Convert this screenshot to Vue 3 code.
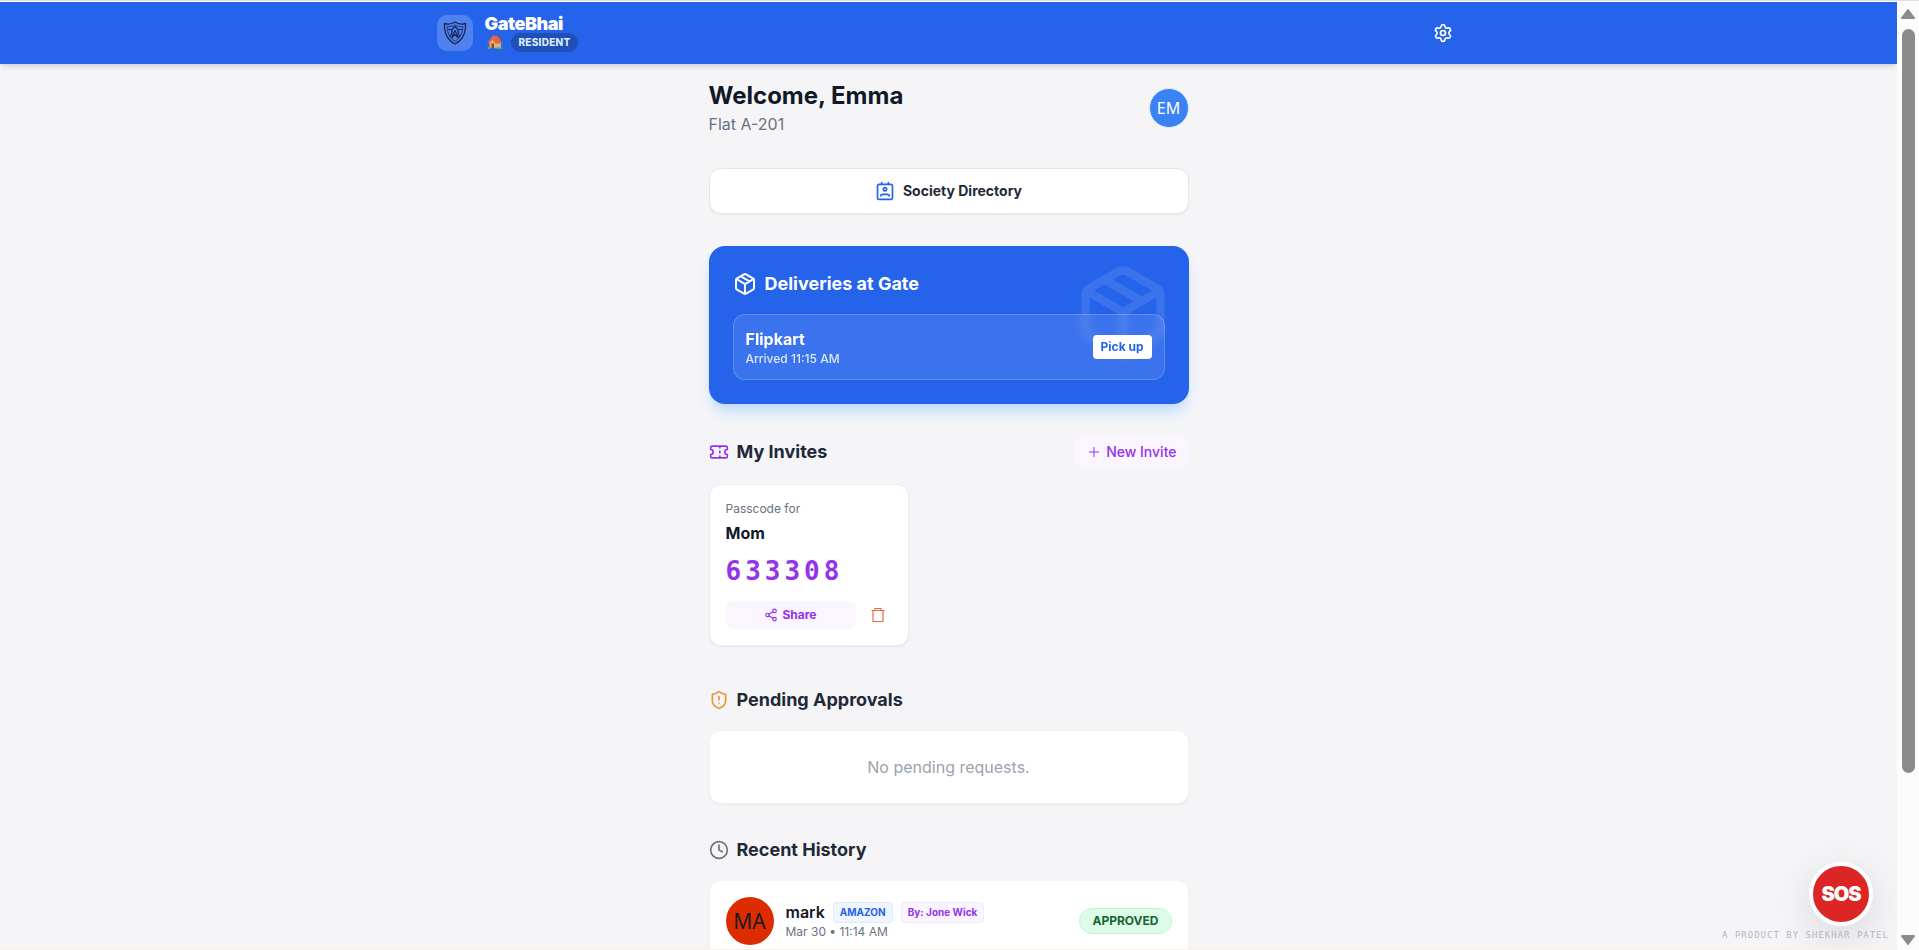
<template>
  <div class="shell">
    <div class="page">
      <header class="topbar">
        <div class="topbar-inner">
          <div class="brand">
            <div class="brand-logo">
              <svg viewBox="0 0 24 24" class="icon-24" fill="none" stroke="#172554" stroke-linejoin="round">
                <path d="M12 1C9.500 2.800 5.500 3.500 1.500 2.500C1 12 4.500 19 12 23C19.500 19 23 12 22.500 2.500C18.500 3.500 14.500 2.800 12 1Z" stroke-width="1.300" />
                <path d="M12 4C10 5.400 7 5.800 4.200 5.500C4.200 12 6.800 17 12 20.300C17.200 17 19.800 12 19.800 5.500C17 5.800 14 5.400 12 4Z" stroke-width="0.800" />
                <path d="M5 8.500H9L12 5.500L15 8.500H19M9 8.500C9.500 11 8 14 6.800 15.500M15 8.500C14.500 11 16 14 17.200 15.500M12 9.500L8.500 17M12 9.500L15.500 17M8.500 17L12 13.500L15.500 17" stroke-width="1.200" />
              </svg>
            </div>
            <div class="brand-text">
              <div class="brand-name">GateBhai</div>
              <div class="brand-role">
                <svg viewBox="0 0 16 16" class="house" aria-hidden="true">
                  <path d="M11 1.500h2v6h-2z" fill="#8d5a48" />
                  <path d="M2.500 8L7 3l7 5.500V14H2.500z" fill="#e8b070" />
                  <path d="M6 1.500L0.500 8.500L2 9.500L5.500 5.500L8.500 9.500L15.500 9.500L10.500 2z" fill="#e0664a" />
                  <path d="M4.500 9.500h2.500V14h-2.500z" fill="#8a4b32" />
                  <path d="M9.500 10.500h3v2h-3z" fill="#7ec8f2" />
                  <path d="M0.500 12.500h3V15h-3zM8 13.500h7.500V15H8z" fill="#5da447" />
                </svg>
                <span class="role-badge">RESIDENT</span>
              </div>
            </div>
          </div>
          <button class="settings" type="button" aria-label="Settings">
            <svg viewBox="0 0 24 24" class="icon-20 line">
              <path d="M9.671 4.136a2.340 2.340 0 0 1 4.659 0 2.340 2.340 0 0 0 3.319 1.915 2.340 2.340 0 0 1 2.330 4.033 2.340 2.340 0 0 0 0 3.831 2.340 2.340 0 0 1-2.330 4.033 2.340 2.340 0 0 0-3.319 1.915 2.340 2.340 0 0 1-4.659 0 2.340 2.340 0 0 0-3.320-1.915 2.340 2.340 0 0 1-2.330-4.033 2.340 2.340 0 0 0 0-3.831A2.340 2.340 0 0 1 6.350 6.051a2.340 2.340 0 0 0 3.319-1.915" />
              <circle cx="12" cy="12" r="3" />
            </svg>
          </button>
        </div>
      </header>

      <main class="content">
        <section class="welcome">
          <div>
            <h1>Welcome, {{ resident.name }}</h1>
            <p>Flat {{ resident.flat }}</p>
          </div>
          <div class="avatar small">{{ resident.initials }}</div>
        </section>

        <button class="directory" type="button">
          <svg viewBox="0 0 24 24" class="icon-20 line">
            <rect x="3" y="4" width="18" height="18" rx="2" />
            <path d="M17 18a2 2 0 0 0-2-2H9a2 2 0 0 0-2 2M8 2v2M16 2v2" />
            <circle cx="12" cy="10" r="2" />
          </svg>
          Society Directory
        </button>

        <section class="deliveries">
          <svg viewBox="0 0 24 24" class="deliveries-bg line">
            <path :d="packagePath" />
          </svg>
          <h2>
            <svg viewBox="0 0 24 24" class="icon-24 line">
              <path :d="packagePath" />
            </svg>
            Deliveries at Gate
          </h2>
          <div v-for="item in deliveries" :key="item.vendor" class="delivery">
            <div>
              <div class="delivery-name">{{ item.vendor }}</div>
              <div class="delivery-time">Arrived {{ item.time }}</div>
            </div>
            <button class="pickup" type="button">Pick up</button>
          </div>
        </section>

        <section class="invites">
          <div class="section-head">
            <h2>
              <svg viewBox="0 0 24 24" class="icon-20 line purple">
                <path d="M2 9a3 3 0 0 1 0 6v2a2 2 0 0 0 2 2h16a2 2 0 0 0 2-2v-2a3 3 0 0 1 0-6V7a2 2 0 0 0-2-2H4a2 2 0 0 0-2 2ZM13 5v2M13 17v2M13 11v2" />
              </svg>
              My Invites
            </h2>
            <button class="new-invite" type="button">
              <svg viewBox="0 0 24 24" class="icon-16 line"><path d="M5 12h14M12 5v14" /></svg>
              New Invite
            </button>
          </div>
          <div class="invite-list">
            <article v-for="invite in invites" :key="invite.code" class="card invite">
              <div class="invite-label">Passcode for</div>
              <div class="invite-name">{{ invite.name }}</div>
              <div class="invite-code">{{ invite.code }}</div>
              <div class="invite-actions">
                <button class="share" type="button">
                  <svg viewBox="0 0 24 24" class="icon-14 line">
                    <circle cx="18" cy="5" r="3" />
                    <circle cx="6" cy="12" r="3" />
                    <circle cx="18" cy="19" r="3" />
                    <path d="M8.590 13.510l6.830 3.980M15.410 6.510l-6.820 3.980" />
                  </svg>
                  Share
                </button>
                <button class="remove" type="button" aria-label="Delete invite">
                  <svg viewBox="0 0 16 16" class="icon-16" fill="none" stroke="currentColor" stroke-width="1.200">
                    <path d="M1.500 3.500h13M5 3.500v-2h6v2M3 3.500v11h10v-11" />
                  </svg>
                </button>
              </div>
            </article>
          </div>
        </section>

        <section class="block">
          <h2>
            <svg viewBox="0 0 24 24" class="icon-20 line orange">
              <path d="M20 13c0 5-3.500 7.500-7.660 8.950a1 1 0 0 1-.670-.010C7.500 20.500 4 18 4 13V6a1 1 0 0 1 1-1c2 0 4.500-1.200 6.240-2.720a1.170 1.170 0 0 1 1.520 0C14.510 3.810 17 5 19 5a1 1 0 0 1 1 1zM12 8v4M12 16h.010" />
            </svg>
            Pending Approvals
          </h2>
          <div class="card empty">No pending requests.</div>
        </section>

        <section class="block">
          <h2>
            <svg viewBox="0 0 24 24" class="icon-20 line gray">
              <circle cx="12" cy="12" r="10" />
              <path d="M12 6v6l4 2" />
            </svg>
            Recent History
          </h2>
          <div v-for="visit in history" :key="visit.name" class="card visit">
            <div class="avatar large">{{ visit.initials }}</div>
            <div class="visit-info">
              <div class="visit-title">
                <span class="visit-name">{{ visit.name }}</span>
                <span class="tag blue">{{ visit.company }}</span>
                <span class="tag violet">By: {{ visit.by }}</span>
              </div>
              <div class="visit-time">{{ visit.time }}</div>
            </div>
            <span class="status">{{ visit.status }}</span>
          </div>
        </section>
      </main>

      <button class="sos" type="button">SOS</button>
      <div class="credit">A PRODUCT BY SHEKHAR PATEL</div>
    </div>

    <div class="scrollbar" aria-hidden="true">
      <svg viewBox="0 0 16 12" class="arrow"><path d="M8 2L14 10H2Z" /></svg>
      <div class="track">
        <div class="thumb"></div>
      </div>
      <svg viewBox="0 0 16 12" class="arrow"><path d="M8 10L14 2H2Z" /></svg>
    </div>
  </div>
</template>

<script setup>
import { ref } from 'vue'

const packagePath =
  'M16.5 9.4L7.5 4.21M21 16V8a2 2 0 0 0-1-1.73l-7-4a2 2 0 0 0-2 0l-7 4A2 2 0 0 0 3 8v8a2 2 0 0 0 1 1.73l7 4a2 2 0 0 0 2 0l7-4A2 2 0 0 0 21 16zM3.27 6.96L12 12.01l8.73-5.05M12 22.08V12'

const resident = ref({ name: 'Emma', flat: 'A-201', initials: 'EM' })

const deliveries = ref([{ vendor: 'Flipkart', time: '11:15 AM' }])

const invites = ref([{ name: 'Mom', code: '633308' }])

const history = ref([
  {
    name: 'mark',
    initials: 'MA',
    company: 'AMAZON',
    by: 'Jone Wick',
    time: 'Mar 30 • 11:14 AM',
    status: 'APPROVED'
  }
])
</script>

<style>
body {
  background: #f5f5f8;
}
</style>

<style scoped>
* {
  box-sizing: border-box;
}

h1,
h2,
p {
  margin: 0;
}

button {
  border: none;
  font-family: inherit;
  cursor: pointer;
}

svg {
  flex-shrink: 0;
}

.shell {
  display: flex;
  height: 100vh;
  overflow: hidden;
  border-top: 1px solid #dfe2e8;
  font-family: Inter, 'Liberation Sans', sans-serif;
  color: #111827;
}

.page {
  flex: 1;
  min-width: 0;
  position: relative;
  overflow: hidden;
  border-top: 1px solid #fff;
  border-bottom: 1px solid #f8f3ea;
}

.line {
  fill: none;
  stroke: currentColor;
  stroke-width: 2;
  stroke-linecap: round;
  stroke-linejoin: round;
}

.icon-14 {
  width: 14px;
  height: 14px;
}

.icon-16 {
  width: 16px;
  height: 16px;
}

.icon-20 {
  width: 20px;
  height: 20px;
}

.icon-24 {
  width: 24px;
  height: 24px;
}

.purple {
  color: #9333ea;
}

.orange {
  color: #e8963a;
}

.gray {
  color: #6b7280;
}

/* header */
.topbar {
  background: #2563eb;
  box-shadow: 0 4px 6px -1px rgba(0, 0, 0, 0.1), 0 2px 4px -2px rgba(0, 0, 0, 0.1);
}

.topbar-inner {
  display: flex;
  align-items: center;
  justify-content: space-between;
  max-width: 1024px;
  height: 62px;
  margin: 0 auto;
}

.brand {
  display: flex;
  align-items: center;
  gap: 12px;
}

.brand-logo {
  display: flex;
  padding: 6px;
  border-radius: 10px;
  background: rgba(255, 255, 255, 0.2);
}

.brand-name {
  font-size: 18px;
  line-height: 18px;
  font-weight: 900;
  letter-spacing: -0.025em;
  color: #fff;
}

.brand-role {
  display: flex;
  align-items: center;
  gap: 8px;
}

.house {
  width: 16px;
  height: 16px;
  margin-left: 2px;
}

.role-badge {
  padding: 2px 8px;
  border-radius: 10px;
  background: #1e50b8;
  color: #dbeafe;
  font-size: 10px;
  line-height: 15px;
  font-weight: 800;
  letter-spacing: 0.025em;
}

.settings {
  display: flex;
  padding: 8px;
  background: none;
  color: #fff;
}

/* content column */
.content {
  display: flex;
  flex-direction: column;
  gap: 32px;
  max-width: 480px;
  margin: 0 auto;
  padding: 16px 0;
}

h2 {
  display: flex;
  align-items: center;
  gap: 8px;
  font-size: 18px;
  line-height: 28px;
  font-weight: 700;
  color: #1f2937;
}

.card {
  background: #fff;
  border: 1px solid #f3f4f6;
  border-radius: 12px;
  box-shadow: 0 1px 2px rgba(0, 0, 0, 0.06);
}

.welcome {
  display: flex;
  align-items: center;
  justify-content: space-between;
}

h1 {
  font-size: 24px;
  line-height: 32px;
  font-weight: 700;
}

.welcome p {
  font-size: 16px;
  line-height: 24px;
  color: #6b7280;
}

.avatar {
  display: flex;
  align-items: center;
  justify-content: center;
  flex-shrink: 0;
  border-radius: 50%;
  font-family: 'Noto Sans', sans-serif;
}

.avatar.small {
  width: 40px;
  height: 40px;
  border: 1px solid #e5edfb;
  background: #3b82f6;
  color: #fff;
  font-size: 16px;
}

.avatar.large {
  width: 48px;
  height: 48px;
  background: #dd2c00;
  color: #1a1a1f;
  font-size: 21px;
}

.directory {
  display: flex;
  align-items: center;
  justify-content: center;
  gap: 8px;
  padding: 12px;
  border: 1px solid #e5e7eb;
  border-radius: 12px;
  background: #fff;
  box-shadow: 0 1px 2px rgba(0, 0, 0, 0.06);
  color: #1f2937;
  font-size: 14px;
  line-height: 20px;
  font-weight: 700;
}

.directory svg {
  color: #2563eb;
}

/* deliveries */
.deliveries {
  position: relative;
  display: flex;
  flex-direction: column;
  gap: 16px;
  padding: 24px;
  border-radius: 16px;
  background: #2563eb;
  box-shadow: 0 10px 15px -3px #bfdbfe, 0 4px 6px -4px #bfdbfe;
  color: #fff;
}

.deliveries-bg {
  position: absolute;
  top: 16px;
  right: 16px;
  width: 100px;
  height: 100px;
  opacity: 0.1;
}

.deliveries h2 {
  color: #fff;
}

.delivery {
  position: relative;
  display: flex;
  align-items: center;
  justify-content: space-between;
  padding: 12px;
  border: 1px solid rgba(255, 255, 255, 0.2);
  border-radius: 12px;
  background: rgba(255, 255, 255, 0.1);
  backdrop-filter: blur(4px);
}

.delivery-name {
  font-size: 16px;
  line-height: 24px;
  font-weight: 700;
}

.delivery-time {
  font-size: 12px;
  line-height: 16px;
  font-weight: 500;
  color: #dbeafe;
}

.pickup {
  padding: 4px 8px;
  border-radius: 4px;
  background: #fff;
  color: #2563eb;
  font-size: 12px;
  line-height: 16px;
  font-weight: 700;
}

/* invites */
.invites {
  display: flex;
  flex-direction: column;
  gap: 16px;
}

.section-head {
  display: flex;
  align-items: center;
  justify-content: space-between;
}

.new-invite {
  display: flex;
  align-items: center;
  gap: 4px;
  padding: 6px 12px;
  border-radius: 8px;
  background: #faf5ff;
  color: #9333ea;
  font-size: 14px;
  line-height: 20px;
  font-weight: 500;
}

.new-invite svg {
  stroke-width: 1.5;
}

.invite-list {
  display: flex;
  gap: 16px;
  padding-bottom: 8px;
}

.invite {
  width: 200px;
  padding: 16px;
  border-color: #ede9fe;
}

.invite-label {
  font-size: 12px;
  line-height: 16px;
  color: #6b7280;
}

.invite-name {
  margin: 4px 0 8px;
  font-size: 16px;
  line-height: 24px;
  font-weight: 700;
}

.invite-code {
  margin-bottom: 12px;
  font-family: 'DejaVu Sans Mono', monospace;
  font-size: 26px;
  line-height: 36px;
  font-weight: 700;
  letter-spacing: 4px;
  color: #9333ea;
}

.invite-actions {
  display: flex;
  gap: 8px;
}

.share {
  display: flex;
  flex: 1;
  align-items: center;
  justify-content: center;
  gap: 4px;
  padding: 6px;
  border-radius: 8px;
  background: #faf5ff;
  color: #9333ea;
  font-size: 12px;
  line-height: 16px;
  font-weight: 700;
}

.remove {
  display: flex;
  padding: 6px;
  background: none;
  color: #e8694a;
}

/* approvals and history */
.block {
  display: flex;
  flex-direction: column;
  gap: 16px;
}

.empty {
  padding: 24px;
  text-align: center;
  font-size: 16px;
  line-height: 24px;
  color: #9ca3af;
}

.visit {
  display: flex;
  align-items: center;
  gap: 12px;
  padding: 16px;
}

.visit-info {
  flex: 1;
}

.visit-title {
  display: flex;
  align-items: center;
  gap: 8px;
}

.visit-name {
  font-size: 16px;
  line-height: 20px;
  font-weight: 600;
}

.tag {
  padding: 2px 6px;
  border: 1px solid;
  border-radius: 4px;
  font-size: 10px;
  line-height: 15px;
  font-weight: 700;
}

.tag.blue {
  border-color: #dbeafe;
  background: #eff6ff;
  color: #2563eb;
}

.tag.violet {
  border-color: #f3e8ff;
  background: #faf5ff;
  color: #9333ea;
}

.visit-time {
  font-size: 12px;
  line-height: 18px;
  color: #6b7280;
}

.status {
  padding: 4px 12px;
  border: 1px solid #bbf7d0;
  border-radius: 13px;
  background: #dcfce7;
  color: #166534;
  font-size: 12px;
  line-height: 16px;
  font-weight: 700;
}

/* floating bits */
.sos {
  position: absolute;
  right: 24px;
  bottom: 23px;
  width: 64px;
  height: 64px;
  padding: 0;
  border: 4px solid #fff;
  border-radius: 50%;
  background: #dc2626;
  box-shadow: 0 10px 40px rgba(0, 0, 0, 0.12);
  color: #fff;
  font-size: 20px;
  font-weight: 900;
  letter-spacing: -0.05em;
}

.credit {
  position: absolute;
  right: 8px;
  bottom: 8px;
  font-family: 'DejaVu Sans Mono', monospace;
  font-size: 9px;
  line-height: 12px;
  letter-spacing: 1px;
  color: #b4b6bd;
}

.scrollbar {
  display: flex;
  flex-direction: column;
  align-items: center;
  width: 22px;
  padding: 7px 0 4px;
  background: #fcfcfc;
}

.arrow {
  width: 16px;
  height: 12px;
  fill: #8b8b8b;
  stroke: #8b8b8b;
  stroke-width: 2;
  stroke-linejoin: round;
}

.track {
  flex: 1;
  width: 13px;
  padding: 9px 0;
}

.thumb {
  height: 83%;
  border-radius: 7px;
  background: #8b8b8b;
}
</style>
